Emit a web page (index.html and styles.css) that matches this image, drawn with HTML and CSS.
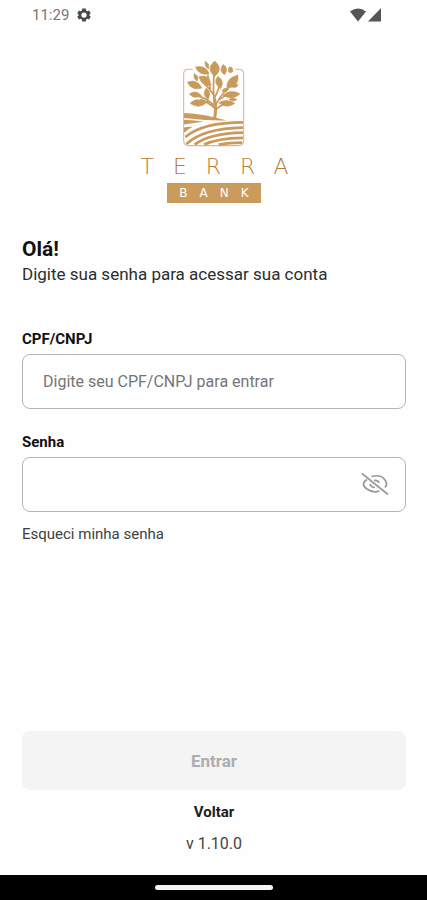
FILE: index.html
```html
<!DOCTYPE html>
<html lang="pt-BR">
<head>
    <meta charset="UTF-8">
    <meta name="viewport" content="width=device-width, initial-scale=1.0">
    <title>Terra Bank</title>
    <link rel="stylesheet" href="styles.css">
</head>
<body>
    <header class="status-bar">
        <div class="status-group">
            <span>11:29</span>
            <svg class="status-gear" viewBox="0 0 24 24" aria-hidden="true">
                <path fill="currentColor" fill-rule="evenodd" d="M9 1h6l.6 3.300 2 1.200 3.200-1.200 2.700 5-2.500 2.200v1l2.500 2.200-2.700 5-3.200-1.200-2 1.200L15 23H9l-.6-3.300-2-1.200-3.200 1.200-2.700-5L3 12.500v-1L.5 9.300l2.700-5 3.200 1.200 2-1.200zM12 7.500a4.500 4.500 0 1 0 0 9 4.500 4.500 0 0 0 0-9z"/>
            </svg>
        </div>
        <svg class="status-signal" viewBox="0 0 32 14" aria-hidden="true">
            <path fill="currentColor" d="M0 3.500Q8-2.500 16 3.500L8 13.500zM31 0v13.500H18z"/>
        </svg>
    </header>

    <main class="page">
        <div class="logo">
            <svg class="logo-mark" viewBox="24 20 192 264" aria-hidden="true">
                <path class="logo-frame" d="M58 53H45Q31 53 31 67V262Q31 277 46 277H192Q207 277 207 262V67Q207 53 193 53H183"/>
                <!-- trunk and branches -->
                <g class="logo-branches">
                    <path stroke-width="9" d="M122 196Q127 172 122 142"/>
                    <path stroke-width="5" d="M122 156Q116 118 120 70M123 168Q104 150 82 142M120 158Q94 136 72 131M120 130Q106 108 94 98M122 136Q132 118 136 100M124 164Q132 136 162 108M125 172Q142 154 168 150M137 141Q154 128 172 127M102 148Q102 136 101 128M110 118Q106 92 102 72"/>
                </g>
                <!-- leaves -->
                <g class="logo-leaves">
                    <path d="M122 29Q149 52 122 74Q95 52 122 29z"/>
                    <path d="M66 47Q94 39 106 66Q77 73 66 47z"/>
                    <path d="M94 30Q108 36 104 52Q92 45 94 30z"/>
                    <path d="M147 39Q164 49 151 69Q132 57 147 39z"/>
                    <path d="M164 47Q176 44 175 60Q165 66 162 59z"/>
                    <path d="M76 75Q107 66 111 100Q85 105 76 75z"/>
                    <path d="M62 66Q77 72 71 87Q58 81 62 66z"/>
                    <path d="M42 91Q72 80 84 108Q55 117 42 91z"/>
                    <path d="M48 126Q65 112 83 130Q63 142 48 126z"/>
                    <path d="M98 108Q114 124 102 141Q83 127 98 108z"/>
                    <path d="M50 153Q69 132 97 152Q75 171 50 153z"/>
                    <path d="M131 74Q153 86 139 110Q116 92 131 74z"/>
                    <path d="M190 70Q195 104 158 109Q155 79 190 70z"/>
                    <path d="M144 117Q149 104 162 112Q157 124 144 117z"/>
                    <path d="M168 102Q177 94 191 99Q183 112 168 102z"/>
                    <path d="M146 130Q167 110 196 125Q176 145 146 130z"/>
                    <path d="M164 141Q176 133 187 142Q176 151 164 141z"/>
                    <path d="M134 151Q158 138 181 153Q157 171 134 151z"/>
                </g>
                <!-- ploughed field -->
                <g class="logo-field">
                    <path d="M32 181Q90 183 157 203Q113 205 32 196z"/>
                    <path d="M32 201Q65 202 90 207Q60 211 32 215z"/>
                    <path d="M32 224Q42 221 57 222Q43 230 32 240z"/>
                </g>
                <g class="logo-furrows">
                    <path d="M36 252Q86 209 205 209"/>
                    <path d="M39 272Q89 226 205 224"/>
                    <path d="M63 274Q108 241 205 239"/>
                    <path d="M91 274Q130 255 205 254"/>
                    <path d="M134 274Q163 268 203 268"/>
                </g>
            </svg>
            <span class="logo-name">TERRA</span>
            <span class="logo-tag">BANK</span>
        </div>

        <h1 class="title">Olá!</h1>
        <p class="subtitle">Digite sua senha para acessar sua conta</p>

        <form class="login-form">
            <div class="field">
                <label for="document">CPF/CNPJ</label>
                <div class="input-box">
                    <input type="text" id="document" name="document" placeholder="Digite seu CPF/CNPJ para entrar">
                </div>
            </div>
            <div class="field">
                <label for="password">Senha</label>
                <div class="input-box">
                    <input type="password" id="password" name="password">
                    <button type="button" class="toggle-password" aria-label="Mostrar senha">
                        <svg viewBox="0 0 28 24" aria-hidden="true">
                            <path d="M1 .5L27 21.500M10.500 3.500Q20 1 24 7Q27 11 24 14.500M6 6.500Q-1 11 6 16Q12 20.500 18.500 18M13 7.500Q17 7 18 10M9 11Q10 14.500 14 14.500"/>
                        </svg>
                    </button>
                </div>
            </div>
            <a href="#" class="forgot">Esqueci minha senha</a>

            <div class="actions">
                <button type="submit" class="submit" disabled>Entrar</button>
                <a href="#" class="back">Voltar</a>
                <span class="version">v 1.10.0</span>
            </div>
        </form>
    </main>

    <footer class="nav-bar">
        <span class="nav-handle"></span>
    </footer>
</body>
</html>
```
FILE: styles.css
```css
* {
    box-sizing: border-box;
}
body {
    font-family: Roboto, sans-serif;
    background-color: #fefefe;
    color: #2a2e2e;
    display: flex;
    flex-direction: column;
    min-height: 100vh;
    margin: 0;
}
.status-bar {
    display: flex;
    justify-content: space-between;
    align-items: center;
    height: 30px;
    padding: 0 45px 0 32px;
    color: #555;
}
.status-group {
    display: flex;
    align-items: center;
    gap: 8px;
    font-size: 15px;
    color: #777;
}
.status-gear {
    width: 14px;
    height: 14px;
    color: #4a4a4a;
}
.status-signal {
    width: 32px;
    height: 14px;
}
.page {
    flex: 1;
    display: flex;
    flex-direction: column;
    padding: 28px 21px 21px 22px;
}
.logo {
    display: flex;
    flex-direction: column;
    align-items: center;
}
.logo-mark {
    width: 66px;
    height: 90px;
}
.logo-frame {
    fill: none;
    stroke: #d8b78f;
    stroke-width: 3;
}
.logo-field {
    fill: #c99a5b;
}
.logo-leaves {
    fill: #c99a5b;
    stroke: #c99a5b;
    stroke-width: 2;
}
.logo-branches {
    fill: none;
    stroke: #c99a5b;
    stroke-linecap: round;
}
.logo-furrows {
    fill: none;
    stroke: #c99a5b;
    stroke-width: 8;
}
.logo-name {
    margin-top: 5px;
    padding-left: 20px;
    font-family: "DejaVu Sans", sans-serif;
    font-size: 22px;
    font-weight: 200;
    line-height: 28px;
    letter-spacing: 19px;
    color: #b87a34;
}
.logo-tag {
    margin-top: 2px;
    padding-left: 12px;
    font-family: "DejaVu Sans", sans-serif;
    font-size: 12px;
    font-weight: 400;
    line-height: 20px;
    letter-spacing: 12px;
    background-color: #cb9b5c;
    color: #fff;
}
.title {
    margin: 32px 0 0;
    font-size: 21px;
    font-weight: 700;
    line-height: 28px;
    color: #111;
}
.subtitle {
    margin: 0;
    font-size: 17px;
    line-height: 22px;
}
.login-form {
    flex: 1;
    display: flex;
    flex-direction: column;
    margin-top: 44px;
}
.field {
    display: flex;
    flex-direction: column;
    gap: 5px;
    margin-bottom: 23px;
}
.field label {
    font-size: 15px;
    font-weight: 700;
    line-height: 20px;
    color: #111;
}
.input-box {
    display: flex;
    align-items: center;
    height: 55px;
    padding: 0 16px 0 20px;
    border: 1px solid #b4b4b4;
    border-radius: 8px;
}
.input-box input {
    flex: 1;
    min-width: 0;
    padding: 0;
    border: none;
    outline: none;
    background: none;
    font-family: inherit;
    font-size: 16px;
    color: #2a2e2e;
}
.input-box input::placeholder {
    color: #757575;
}
.toggle-password {
    display: flex;
    padding: 0;
    border: none;
    background: none;
    cursor: pointer;
}
.toggle-password svg {
    width: 28px;
    height: 24px;
    fill: none;
    stroke: #999;
    stroke-width: 1.7;
}
.forgot {
    align-self: flex-start;
    margin-top: -11px;
    font-size: 15px;
    line-height: 20px;
    color: #3c4242;
    text-decoration: none;
}
.actions {
    display: flex;
    flex-direction: column;
    align-items: center;
    gap: 12px;
    margin-top: auto;
}
.submit {
    width: 100%;
    height: 59px;
    border: none;
    border-radius: 8px;
    background-color: #f4f4f4;
    font-family: inherit;
    font-size: 17px;
    font-weight: 700;
    color: #adadad;
}
.back {
    font-size: 15px;
    font-weight: 700;
    line-height: 20px;
    color: #1c2020;
    text-decoration: none;
}
.version {
    font-size: 16px;
    line-height: 20px;
    color: #444;
}
.nav-bar {
    display: flex;
    justify-content: center;
    align-items: center;
    height: 25px;
    background-color: #000;
}
.nav-handle {
    width: 118px;
    height: 5px;
    border-radius: 3px;
    background-color: #f4f4f4;
}
```
